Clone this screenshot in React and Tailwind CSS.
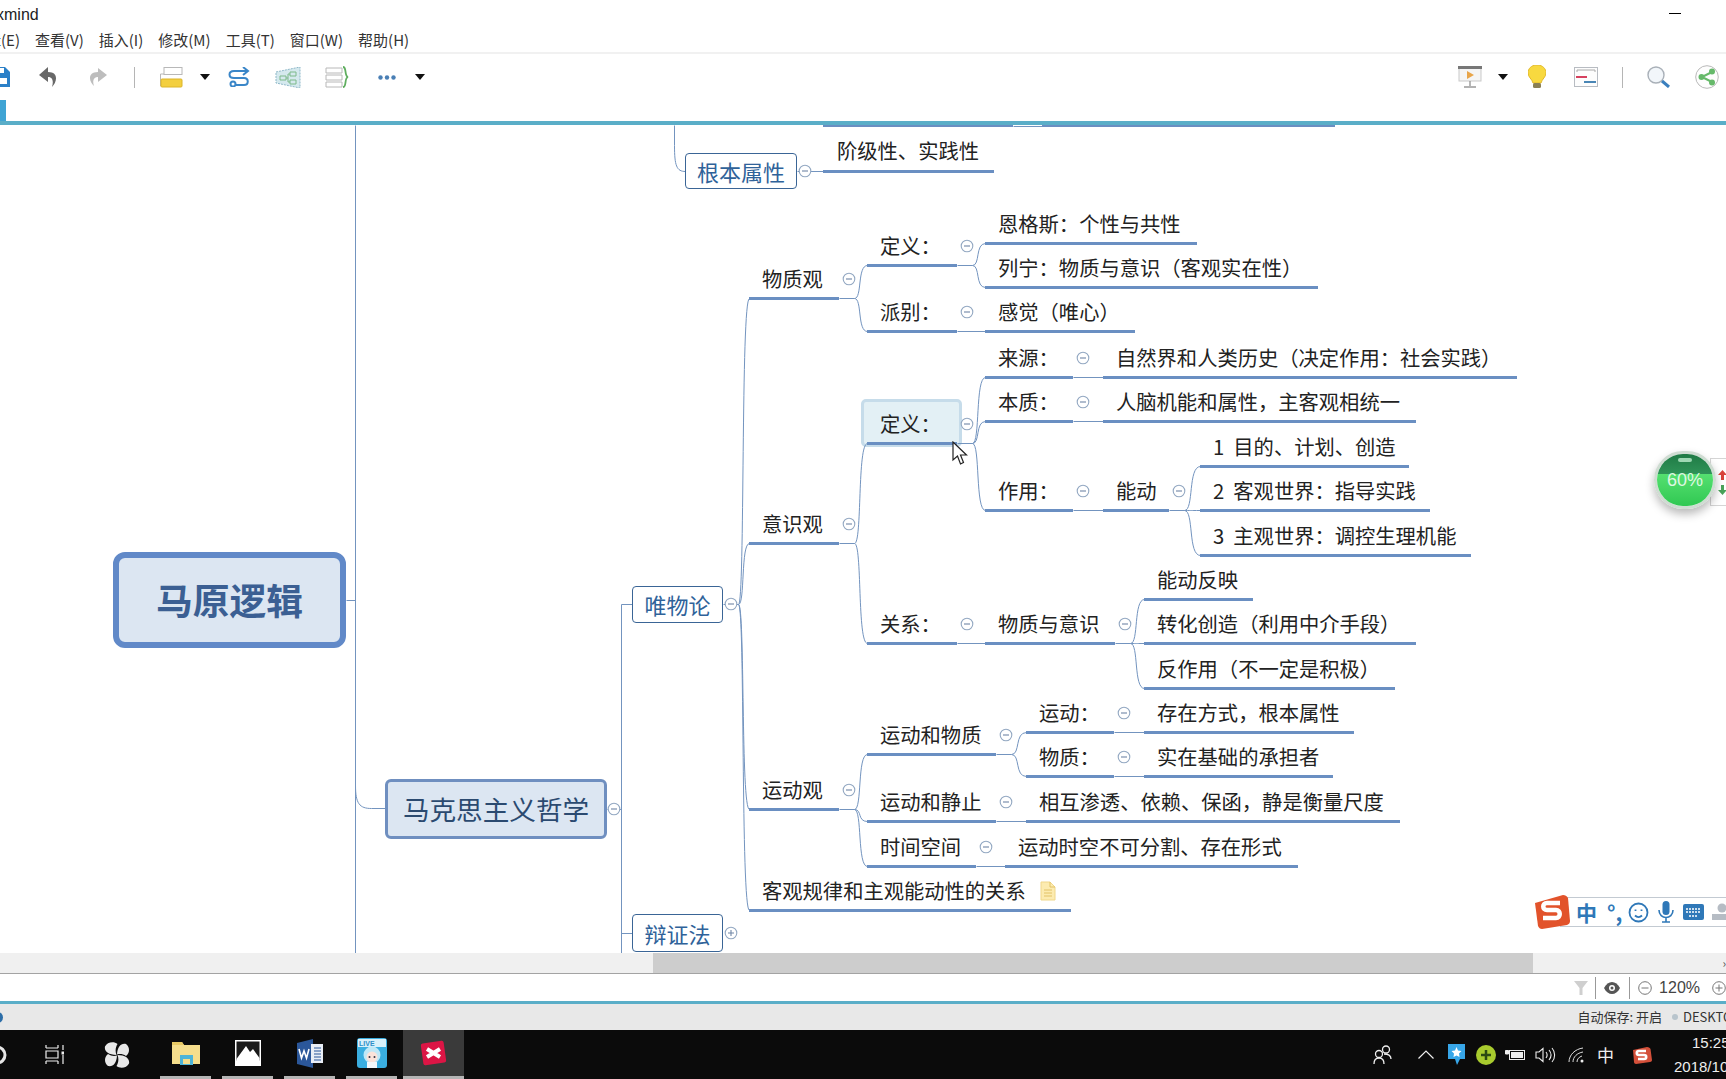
import React from 'react';

const CANVAS_TOP = 125;

// mind map data, coordinates are the underline start / end on the page
const materialism = [
  {
    t: '物质观', x: 749, y: 298, end: 839, kids: [
      {
        t: '定义：', x: 867, y: 265, end: 957, kids: [
          { t: '恩格斯：个性与共性', x: 985, y: 243, end: 1197 },
          { t: '列宁：物质与意识（客观实在性）', x: 985, y: 287, end: 1318 },
        ],
      },
      {
        t: '派别：', x: 867, y: 331, end: 957, kids: [
          { t: '感觉（唯心）', x: 985, y: 331, end: 1135 },
        ],
      },
    ],
  },
  {
    t: '意识观', x: 749, y: 543, end: 839, kids: [
      {
        t: '定义：', x: 867, y: 443, end: 957, selected: true, kids: [
          { t: '来源：', x: 985, y: 377, end: 1073, kids: [{ t: '自然界和人类历史（决定作用：社会实践）', x: 1103, y: 377, end: 1517 }] },
          { t: '本质：', x: 985, y: 421, end: 1073, kids: [{ t: '人脑机能和属性，主客观相统一', x: 1103, y: 421, end: 1416 }] },
          {
            t: '作用：', x: 985, y: 510, end: 1073, kids: [
              {
                t: '能动', x: 1103, y: 510, end: 1169, kids: [
                  { t: '1  目的、计划、创造', x: 1200, y: 466, end: 1409 },
                  { t: '2  客观世界：指导实践', x: 1200, y: 510, end: 1430 },
                  { t: '3  主观世界：调控生理机能', x: 1200, y: 555, end: 1471 },
                ],
              },
            ],
          },
        ],
      },
      {
        t: '关系：', x: 867, y: 643, end: 957, kids: [
          {
            t: '物质与意识', x: 985, y: 643, end: 1115, kids: [
              { t: '能动反映', x: 1144, y: 599, end: 1253 },
              { t: '转化创造（利用中介手段）', x: 1144, y: 643, end: 1416 },
              { t: '反作用（不一定是积极）', x: 1144, y: 688, end: 1395 },
            ],
          },
        ],
      },
    ],
  },
  {
    t: '运动观', x: 749, y: 809, end: 839, kids: [
      {
        t: '运动和物质', x: 867, y: 754, end: 996, kids: [
          { t: '运动：', x: 1026, y: 732, end: 1114, kids: [{ t: '存在方式，根本属性', x: 1144, y: 732, end: 1354 }] },
          { t: '物质：', x: 1026, y: 776, end: 1114, kids: [{ t: '实在基础的承担者', x: 1144, y: 776, end: 1333 }] },
        ],
      },
      { t: '运动和静止', x: 867, y: 821, end: 996, kids: [{ t: '相互渗透、依赖、保函，静是衡量尺度', x: 1026, y: 821, end: 1400 }] },
      { t: '时间空间', x: 867, y: 866, end: 976, kids: [{ t: '运动时空不可分割、存在形式', x: 1005, y: 866, end: 1298 }] },
    ],
  },
  { t: '客观规律和主观能动性的关系', x: 749, y: 910, end: 1071, note: true },
];

const curve = (px, py, cx, cy) => {
  const dx = cx - px;
  return `M${px} ${py - CANVAS_TOP} C${px + dx * 0.6} ${py - CANVAS_TOP} ${px + dx * 0.2} ${cy - CANVAS_TOP} ${cx} ${cy - CANVAS_TOP}`;
};

const collectLines = (node, out = []) => {
  if (!node.kids) return out;
  const stub = node.end + 15;
  if (node.kids.length === 1) {
    out.push(`M${node.end} ${node.y - CANVAS_TOP} H${node.kids[0].x}`);
  } else {
    out.push(`M${node.end} ${node.y - CANVAS_TOP} H${stub}`);
    node.kids.forEach((k) => out.push(curve(stub, node.y, k.x, k.y)));
  }
  node.kids.forEach((k) => collectLines(k, out));
  return out;
};

const flatten = (nodes, out = []) => {
  nodes.forEach((n) => {
    out.push(n);
    if (n.kids) flatten(n.kids, out);
  });
  return out;
};

const allNodes = flatten(materialism);
const connectorPaths = [
  'M355 0 V828',
  'M346 475 H355',
  'M355 660 C355 678 359 683 371 683 H385',
  'M607 684 H621',
  'M621 479 V828',
  'M621 479 H632',
  'M621 808 H632',
  'M674 0 V20 C674 40 676 46 685 46',
  'M797 46 H823',
  'M723 479 H738',
  'M1013 1 H1042',
  ...materialism.map((m) => curve(738, 604, m.x, m.y)),
  ...materialism.flatMap((m) => collectLines(m)),
];

const Fold = ({ x, y, plus }) => (
  <svg
    className="absolute"
    style={{ left: x - 7, top: y - CANVAS_TOP - 7 }}
    width="14"
    height="14"
    viewBox="0 0 14 14"
  >
    <circle cx="7" cy="7" r="5.8" fill="#fff" stroke="#93a8c2" strokeWidth="1.1" />
    <path d={plus ? 'M4 7H10M7 4V10' : 'M4 7H10'} stroke="#6f86a6" strokeWidth="1.1" />
  </svg>
);

const NoteIcon = () => (
  <svg className="ml-[14px] mt-[1px] shrink-0" width="16" height="20" viewBox="0 0 16 20">
    <path d="M1 1H10L15 6V19H1Z" fill="#fcebb0" stroke="#f0d78a" />
    <path d="M10 1V6H15M4 9H12M4 12H12M4 15H12" stroke="#e2c266" fill="none" />
  </svg>
);

const MapNode = ({ node }) => (
  <div
    className="absolute h-[32px] border-b-[3px] border-[#6a8fc2] pl-[13px] flex text-[20.3px] leading-[21px] text-[#222] whitespace-pre"
    style={{ left: node.x, top: node.y - CANVAS_TOP - 30, width: node.end - node.x }}
  >
    <span>{node.t}</span>
    {node.note && <NoteIcon />}
  </div>
);

const Box = ({ x, y, w, h, children, className }) => (
  <div
    className={`absolute flex items-center justify-center whitespace-nowrap ${className}`}
    style={{ left: x, top: y - CANVAS_TOP, width: w, height: h }}
  >
    {children}
  </div>
);

const MindMap = () => (
  <div className="relative flex-1 overflow-hidden bg-white">
    <div className="absolute left-[823px] top-0 w-[190px] h-[2px] bg-[#6a8fc2]" />
    <div className="absolute left-[1042px] top-0 w-[293px] h-[2px] bg-[#6a8fc2]" />

    {/* selected topic highlight */}
    <div className="absolute left-[861px] top-[274px] w-[101px] h-[48px] rounded-[5px] bg-[#e3f0f5] border-[3px] border-[#c6dcea]" />

    <svg className="absolute inset-0" width="1726" height="828" fill="none">
      <g transform="translate(0.5 0.5)">
        {connectorPaths.map((d, i) => (
          <path key={i} d={d} stroke="#7394bf" strokeWidth="1" />
        ))}
      </g>
    </svg>

    <Box x={113} y={552} w={233} h={96} className="rounded-[12px] border-[6px] border-[#6189c8] bg-[#dce6f2] text-[36.8px] font-bold text-[#3b5f93]">
      马原逻辑
    </Box>
    <Box x={385} y={779} w={222} h={60} className="rounded-[6px] border-[3px] border-[#6f8fc0] bg-[#dce6f2] text-[26.6px] text-[#2b4a70]">
      马克思主义哲学
    </Box>
    <Box x={632} y={586} w={91} h={37} className="rounded-[4px] border border-[#3a6596] bg-white text-[22px] text-[#2f6299]">
      唯物论
    </Box>
    <Box x={632} y={914} w={91} h={38} className="rounded-[4px] border border-[#3a6596] bg-white text-[22px] text-[#2f6299]">
      辩证法
    </Box>
    <Box x={685} y={153} w={112} h={36} className="rounded-[4px] border border-[#3a6596] bg-white text-[22px] text-[#2f6299]">
      根本属性
    </Box>

    <div
      className="absolute h-[32px] border-b-[3px] border-[#6a8fc2] pl-[14px] text-[20.3px] leading-[19px] text-[#222]"
      style={{ left: 823, top: 171 - CANVAS_TOP - 30, width: 171 }}
    >
      阶级性、实践性
    </div>

    {allNodes.map((n, i) => (
      <MapNode key={i} node={n} />
    ))}
    {allNodes.filter((n) => n.kids).map((n, i) => (
      <Fold key={i} x={n.end + 10} y={n.y - 19} />
    ))}
    <Fold x={614} y={809} />
    <Fold x={731} y={604} />
    <Fold x={731} y={933} plus />
    <Fold x={805} y={171} />

    {/* mouse cursor */}
    <svg className="absolute left-[952px] top-[316px]" width="16" height="25" viewBox="0 0 16 25">
      <path d="M1 1V19L5.5 15L8.5 23L11.5 21.5L8.5 14H14.5Z" fill="#fff" stroke="#222" strokeWidth="1.2" />
    </svg>

    {/* sogou input bar */}
    <div className="absolute left-[1560px] top-[772px] w-[170px] h-[30px] border border-[#c3cad2] bg-white flex items-center pl-[15px] text-[#2f78b8]">
      <span className="text-[21px] font-bold leading-none">中</span>
      <span className="ml-[10px] text-[21px] font-bold leading-none">°,</span>
      <svg className="ml-[6px]" width="21" height="21" viewBox="0 0 21 21" fill="none" stroke="#2f78b8" strokeWidth="1.8">
        <circle cx="10.5" cy="10.5" r="9" />
        <path d="M7 13.5C9 15.5 12 15.5 14 13.5M7.5 7.5V9M13.5 7.5V9" />
      </svg>
      <svg className="ml-[9px]" width="16" height="22" viewBox="0 0 16 22" fill="#2f78b8">
        <rect x="4.5" y="0" width="7" height="14" rx="3.5" />
        <path d="M1 9C1 19 15 19 15 9M8 16V21M4 21H12" fill="none" stroke="#2f78b8" strokeWidth="1.6" />
      </svg>
      <svg className="ml-[9px]" width="21" height="16" viewBox="0 0 21 16">
        <rect width="21" height="16" rx="2" fill="#2f78b8" />
        <path d="M3 5H18M3 8H18M6 12H15" stroke="#fff" strokeWidth="1.4" strokeDasharray="2 1" />
      </svg>
      <svg className="ml-[8px]" width="16" height="18" viewBox="0 0 16 18" fill="#b6bcc4">
        <circle cx="10" cy="5" r="4.5" />
        <path d="M0 11H16V17H0Z" />
      </svg>
    </div>
    <svg className="absolute left-[1533px] top-[769px]" width="38" height="36" viewBox="0 0 38 36">
      <path d="M2 9L30 1C32 1 34 2 35 4L37 27C37 29 36 30 34 31L9 35C7 35 6 34 5 32Z" fill="#e2532b" />
      <path d="M27 9H14C9 9 9 16 14 16H23C28 16 28 24 23 24H10" fill="none" stroke="#fff" strokeWidth="4.5" />
    </svg>

    {/* speed ball */}
    <div className="absolute left-[1710px] top-[333px] w-[20px] h-[48px] border border-[#d5d5d5] bg-white flex flex-col items-start pl-[7px] justify-center gap-[5px]">
      <svg width="9" height="10" viewBox="0 0 9 10"><path d="M4.5 0L9 5H6V10H3V5H0Z" fill="#d9433b" /></svg>
      <svg width="9" height="10" viewBox="0 0 9 10"><path d="M4.5 10L9 5H6V0H3V5H0Z" fill="#4aa35a" /></svg>
    </div>
    <div className="absolute left-[1654px] top-[326px] w-[62px] h-[58px] rounded-full border-[3px] border-[#cfdcd2] overflow-hidden flex flex-col shadow-[0_5px_10px_rgba(0,0,0,0.28)]">
      <div className="h-[20px] bg-gradient-to-b from-[#1f7a45] to-[#2f9458] flex justify-center pt-[4px]">
        <div className="w-[14px] h-[4px] rounded-full bg-[#9fd8b4]" />
      </div>
      <div className="flex-1 bg-gradient-to-b from-[#54e070] to-[#2fc852]" />
      <span className="absolute inset-0 flex items-center justify-center text-[18px] leading-none text-[#dff7e2] font-['Liberation_Sans',sans-serif]">60%</span>
    </div>
  </div>
);

const Caret = ({ className }) => (
  <svg className={className} width="10" height="6" viewBox="0 0 10 6">
    <path d="M0 0H10L5 6Z" fill="#111" />
  </svg>
);

const Toolbar = () => (
  <div className="h-[46px] bg-white flex items-center shrink-0">
    <svg width="10" height="20" viewBox="0 0 10 20">
      <path d="M0 0H5L10 5V20H0Z" fill="#2b80c8" />
      <rect x="0" y="11" width="7" height="6" fill="#fff" />
      <rect x="0" y="1" width="4" height="5" fill="#fff" />
    </svg>
    <svg className="ml-[29px]" width="19" height="20" viewBox="0 0 19 20">
      <path d="M9 0L0 8L9 15V10C13 10 15 13 13 20C18 15 20 5 9 5Z" fill="#686868" />
    </svg>
    <svg className="ml-[30px]" width="19" height="18" viewBox="0 0 19 18">
      <path d="M10 0L19 7L10 14V9C6 9 4 12 6 18C1 14 -1 4 10 4Z" fill="#bdbdbd" />
    </svg>
    <div className="ml-[27px] w-px h-[21px] bg-[#b5b5b5]" />
    <svg className="ml-[25px]" width="23" height="21" viewBox="0 0 23 21">
      <rect x="4" y="0.5" width="18" height="7" fill="#fff" stroke="#b8b8b8" />
      <path d="M0.5 7V19H4M0.5 7H4" fill="none" stroke="#b8b8b8" />
      <rect x="1" y="12" width="21" height="8" rx="1" fill="#f3cf3f" stroke="#dcb52a" />
    </svg>
    <Caret className="ml-[17px]" />
    <svg className="ml-[18px]" width="22" height="20" viewBox="0 0 22 20" fill="none" stroke="#3a86c8" strokeWidth="2">
      <path d="M20 4H6C0 4 0 11 6 11H16C21 11 21 18 16 18H7" />
      <circle cx="5" cy="17" r="2.5" />
      <path d="M15 0L20 4L15 8" />
    </svg>
    <svg className="ml-[25px]" width="26" height="21" viewBox="0 0 26 21">
      <path d="M1 5L25 0V21L1 16Z" fill="#d5e9ee" stroke="#8fb8c9" strokeDasharray="2 1" />
      <path d="M5 9H11V13H5ZM15 5H21V9H15ZM15 13H21V17H15ZM11 11H13V7H15M13 11V15H15" fill="none" stroke="#7cb98a" />
    </svg>
    <svg className="ml-[24px]" width="24" height="22" viewBox="0 0 24 22" fill="none">
      <path d="M1 2H17V7H1ZM1 9H17V14H1ZM1 16H17V21H1Z" stroke="#b8b8b8" />
      <path d="M18 1C22 1 19 10 23 11C19 12 22 21 18 21" stroke="#5fae5f" strokeWidth="1.8" />
    </svg>
    <svg className="ml-[29px]" width="18" height="5" viewBox="0 0 18 5" fill="#4a7fb5">
      <circle cx="2.5" cy="2.5" r="2.2" />
      <circle cx="9" cy="2.5" r="2.2" />
      <circle cx="15.5" cy="2.5" r="2.2" />
    </svg>
    <Caret className="ml-[19px]" />

    <svg className="ml-auto" width="24" height="22" viewBox="0 0 24 22">
      <rect x="1" y="2" width="22" height="13" fill="#f5f5f5" stroke="#c9c9c9" />
      <rect width="24" height="3" fill="#777" />
      <path d="M9 5L16 9L9 13Z" fill="#e8a54a" />
      <path d="M12 15V20M6 21H18" stroke="#999" strokeWidth="1.4" />
    </svg>
    <Caret className="ml-[16px]" />
    <svg className="ml-[20px]" width="18" height="24" viewBox="0 0 18 24">
      <path d="M9 0C3 0 0 4 0 8C0 12 4 14 5 18H13C14 14 18 12 18 8C18 4 15 0 9 0Z" fill="#f8d93f" stroke="#e2b92a" />
      <rect x="5" y="18" width="8" height="5" rx="1.5" fill="#8a7f55" />
    </svg>
    <svg className="ml-[28px]" width="24" height="20" viewBox="0 0 24 20">
      <rect x="0.5" y="0.5" width="23" height="19" fill="#fdfdfd" stroke="#b8bcc2" />
      <path d="M2 10H13" stroke="#d6415f" strokeWidth="2" />
      <path d="M10 15H22" stroke="#4a86b5" strokeWidth="2" />
      <path d="M3 5V3H21V5" stroke="#aaa" fill="none" />
    </svg>
    <div className="ml-[24px] w-px h-[21px] bg-[#b5b5b5]" />
    <svg className="ml-[24px]" width="23" height="22" viewBox="0 0 23 22" fill="none">
      <circle cx="9" cy="9" r="8" fill="#f2f6fa" stroke="#a9b0b8" strokeWidth="1.4" />
      <path d="M15 15L22 21" stroke="#3a7fbe" strokeWidth="3" />
    </svg>
    <svg className="ml-[25px] mr-[7px]" width="24" height="24" viewBox="0 0 24 24" fill="none">
      <circle cx="12" cy="12" r="11.3" fill="#fdfdfd" stroke="#b9b9b9" />
      <path d="M7 12L17 7M7 12L17 17" stroke="#66b96a" strokeWidth="2" />
      <circle cx="6.5" cy="12" r="3" fill="#66b96a" />
      <circle cx="17" cy="6.5" r="3" fill="#66b96a" />
      <circle cx="17" cy="17.5" r="3" fill="#66b96a" />
    </svg>
  </div>
);

const menus = ['编辑(E)', '查看(V)', '插入(I)', '修改(M)', '工具(T)', '窗口(W)', '帮助(H)'];

const TaskButton = ({ active, children }) => (
  <div className={`h-full flex items-center justify-center border-b-[3px] border-[#b5b5b5] ${active ? 'bg-[#3a3a3a] w-[61px] ml-[-5px]' : 'w-[51px]'}`}>
    {children}
  </div>
);

const Taskbar = () => (
  <div className="h-[49px] bg-[#0b0b0b] flex items-center shrink-0 overflow-hidden">
    <svg className="-ml-[14px]" width="22" height="22" viewBox="0 0 22 22" fill="none">
      <circle cx="11" cy="11" r="8" stroke="#e5e5e5" strokeWidth="3" />
    </svg>
    <svg className="ml-[36px]" width="20" height="19" viewBox="0 0 20 19" fill="none" stroke="#eee" strokeWidth="1.2">
      <path d="M2 3V0M14 3V0M2 3H14M2 6H14V13H2ZM2 16H14M2 19V16M14 19V16M19 0V5M19 10V19" />
      <rect x="17.5" y="6.5" width="3" height="3" fill="#eee" stroke="none" />
    </svg>
    <svg className="ml-[40px]" width="26" height="26" viewBox="0 0 26 26" fill="#e8e8e8">
      <path d="M12.5 13C4 13 0 9 1 4.5C3 0 10 -1 13.5 2C11.5 5.5 11 9 12.5 13Z" />
      <path d="M13 12.5C13.5 4.5 17 1 22 2C26 5 26 11 22 14C19 12 16 11.5 13 12.5Z" />
      <path d="M13.5 13C22 13 26 17 25 21.5C23 26 16 27 12.5 24C14.5 20.5 15 17 13.5 13Z" />
      <path d="M13 13.5C12.5 21.5 9 25 4 24C0 21 0 15 4 12C7 14 10 14.5 13 13.5Z" />
    </svg>
    <div className="ml-[30px] h-full flex gap-[11px]">
      <TaskButton>
        <svg width="28" height="24" viewBox="0 0 28 24">
          <path d="M0 1H10L12 4H28V23H0Z" fill="#f6de8c" />
          <path d="M0 1H10L12 4H0Z" fill="#e8c964" />
          <rect x="8" y="14" width="13" height="10" fill="#4eb4d8" />
          <rect x="11" y="18" width="7" height="5" fill="#f6de8c" />
        </svg>
      </TaskButton>
      <TaskButton>
        <svg width="26" height="26" viewBox="0 0 26 26">
          <rect width="26" height="26" fill="#fff" />
          <rect x="1.5" y="1.5" width="23" height="19" fill="#1a1a1a" />
          <path d="M1.5 19L11 6L15 12L18 9L24.5 18V24.5H1.5Z" fill="#fff" />
        </svg>
      </TaskButton>
      <TaskButton>
        <svg width="26" height="29" viewBox="0 0 26 29">
          <path d="M0 4L16 0V29L0 25Z" fill="#2b579a" />
          <rect x="14" y="5" width="12" height="19" fill="#e9eef6" />
          <path d="M17 9H24M17 12H24M17 15H24M17 18H24M17 21H24" stroke="#2b579a" strokeWidth="1.2" />
          <path d="M2 10L4.5 19L7 12L9.5 19L12 10" fill="none" stroke="#fff" strokeWidth="1.6" />
        </svg>
      </TaskButton>
      <TaskButton>
        <svg width="30" height="30" viewBox="0 0 30 30">
          <rect width="30" height="30" rx="3" fill="#3aaee0" />
          <rect x="1" y="1" width="28" height="8" fill="#d8f0fa" />
          <text x="2" y="8" fontSize="7" fontWeight="700" fill="#2d8fc8" fontFamily="Liberation Sans, sans-serif">LIVE</text>
          <circle cx="15" cy="17" r="8.5" fill="#bfe8f7" />
          <circle cx="15" cy="19" r="5.5" fill="#fbe3da" />
          <circle cx="12.5" cy="19" r="1" fill="#334" />
          <circle cx="17.5" cy="19" r="1" fill="#334" />
          <rect x="10" y="24" width="10" height="6" fill="#f4f8fb" />
        </svg>
      </TaskButton>
      <TaskButton active>
        <svg width="27" height="28" viewBox="0 0 27 28">
          <rect x="2" y="3" width="23" height="22" rx="2" fill="#dc1545" transform="rotate(-8 13.5 14)" />
          <path d="M7 10L20 18M20 10L7 18" stroke="#fff" strokeWidth="4" />
        </svg>
      </TaskButton>
    </div>

    {/* tray */}
    <svg className="ml-auto" width="19" height="20" viewBox="0 0 19 20" fill="none" stroke="#eee" strokeWidth="1.3">
      <circle cx="13" cy="4.5" r="3.5" />
      <circle cx="6" cy="9" r="3.5" />
      <path d="M1 19C1 14 3 13 6 13C9 13 11 14 11 19M11 9C15 9 18 10 18 14" />
    </svg>
    <svg className="ml-[26px]" width="16" height="9" viewBox="0 0 16 9" fill="none" stroke="#eee" strokeWidth="1.2">
      <path d="M0.5 8.5L8 1L15.5 8.5" />
    </svg>
    <svg className="ml-[14px]" width="17" height="21" viewBox="0 0 17 21">
      <path d="M0 0H17V15H12L9 21L7 15H0Z" fill="#37a6e8" />
      <path d="M8.5 3L10 6.5L13.5 7L11 9.5L11.5 13L8.5 11.5L5.5 13L6 9.5L3.5 7L7 6.5Z" fill="#fff" />
    </svg>
    <svg className="ml-[11px]" width="20" height="20" viewBox="0 0 20 20">
      <circle cx="10" cy="10" r="10" fill="#a8cb2e" />
      <path d="M10 5V15M5 10H15" stroke="#2c4a12" strokeWidth="2.5" />
    </svg>
    <svg className="ml-[9px]" width="20" height="12" viewBox="0 0 20 12" fill="none" stroke="#eee">
      <rect x="4.5" y="1.5" width="15" height="9" />
      <rect x="6" y="3" width="12" height="6" fill="#eee" stroke="none" />
      <path d="M0.5 1.5H3.5V5H0.5Z" fill="#eee" />
    </svg>
    <svg className="ml-[10px]" width="21" height="16" viewBox="0 0 21 16" fill="none" stroke="#eee" strokeWidth="1.1">
      <path d="M1 5H4L8 1.5V14.5L4 11H1ZM11 5C12.5 7 12.5 9 11 11M14 3C16.5 6 16.5 10 14 13M17 1C20.5 5 20.5 11 17 15" />
    </svg>
    <svg className="ml-[12px]" width="17" height="16" viewBox="0 0 17 16" fill="none" stroke="#ddd" strokeWidth="1">
      <path d="M1 15C1 8 7 2 15 1M5 15C5 10 9 6 15 5M9 15C9 12 11 10 14 9" />
      <circle cx="14" cy="14" r="1.5" fill="#eee" stroke="none" />
    </svg>
    <span className="ml-[12px] text-[#eee] text-[17px] leading-none font-['Noto_Sans_CJK_SC',sans-serif]">中</span>
    <svg className="ml-[18px]" width="20" height="18" viewBox="0 0 20 18">
      <path d="M1 4L15 1C17 1 18 2 18.5 3L20 14C20 15 19 16 18 16L4 18C3 18 2 17 2 16Z" fill="#d4503a" />
      <path d="M14 5H7C4 5 4 9 7 9H12C15 9 15 13 12 13H6" fill="none" stroke="#fff" strokeWidth="2.5" />
    </svg>
    <div className="ml-[22px] w-[52px] shrink-0 whitespace-nowrap text-[#eee] text-[15px] leading-[24px] font-['Liberation_Sans',sans-serif]">
      <div className="pl-[18px]">15:25</div>
      <div>2018/10</div>
    </div>
  </div>
);

export default function App() {
  return (
    <div className="w-[1726px] h-[1079px] flex flex-col overflow-hidden bg-white font-['Noto_Sans_CJK_SC','Liberation_Sans',sans-serif]">
      {/* title bar */}
      <div className="h-[26px] pt-[3px] flex items-center justify-between shrink-0">
        <span className="-ml-[4px] text-[16px] text-[#222] font-['Liberation_Sans',sans-serif]">xmind</span>
        <div className="mr-[45px] mb-[3px] w-[12px] h-px bg-black" />
      </div>

      {/* menu */}
      <div className="h-[28px] pt-[3px] flex items-center gap-[15px] -ml-[29px] border-b-2 border-[#f1f1f1] text-[15px] text-[#333] shrink-0">
        {menus.map((m) => (
          <span key={m}>{m}</span>
        ))}
      </div>

      <Toolbar />

      <div className="h-[21px] shrink-0">
        <div className="w-[6px] h-full bg-[#3fa4d4]" />
      </div>
      <div className="h-[4px] bg-[#5aaec8] shrink-0" />

      <MindMap />

      {/* horizontal scrollbar */}
      <div className="h-[20px] bg-[#f0f0f0] flex items-center shrink-0">
        <div className="ml-[653px] w-[880px] h-full bg-[#cdcdcd]" />
        <span className="ml-auto text-[12px] leading-none text-[#555]">›</span>
      </div>
      <div className="h-px bg-[#a3a3a3] shrink-0" />

      {/* status bar */}
      <div className="h-[27px] bg-white flex items-center justify-end shrink-0">
        <svg width="14" height="14" viewBox="0 0 14 14">
          <path d="M0 0H14L8.5 7V14H5.5V7Z" fill="#cfcfcf" />
        </svg>
        <div className="ml-[7px] w-px h-[22px] bg-[#999]" />
        <svg className="ml-[8px]" width="16" height="12" viewBox="0 0 16 12">
          <path d="M0 6C4 -2 12 -2 16 6C12 14 4 14 0 6Z" fill="#555" />
          <circle cx="8" cy="6" r="3" fill="#fff" />
          <circle cx="8" cy="6" r="1.5" fill="#555" />
        </svg>
        <div className="ml-[9px] w-px h-[22px] bg-[#999]" />
        <svg className="ml-[8px]" width="14" height="14" viewBox="0 0 14 14" fill="none" stroke="#777">
          <circle cx="7" cy="7" r="6.3" />
          <path d="M3.5 7H10.5" />
        </svg>
        <span className="ml-[7px] text-[16px] text-[#444] font-['Liberation_Sans',sans-serif]">120%</span>
        <svg className="ml-[12px]" width="14" height="14" viewBox="0 0 14 14" fill="none" stroke="#777">
          <circle cx="7" cy="7" r="6.3" />
          <path d="M3.5 7H10.5M7 3.5V10.5" />
        </svg>
      </div>
      <div className="h-[3px] bg-[#5aaec8] shrink-0" />

      {/* workbench status */}
      <div className="h-[26px] bg-[#e8e8e8] flex items-center shrink-0 overflow-hidden text-[13px] text-[#333]">
        <div className="-ml-[8px] w-[11px] h-[11px] rounded-full bg-[#2d6ea8]" />
        <span className="ml-auto">自动保存: 开启</span>
        <div className="ml-[10px] w-[6px] h-[6px] rounded-full bg-[#b8c4cc]" />
        <span className="ml-[5px] w-[43px] whitespace-nowrap">DESKTOP</span>
      </div>

      <Taskbar />
    </div>
  );
}
